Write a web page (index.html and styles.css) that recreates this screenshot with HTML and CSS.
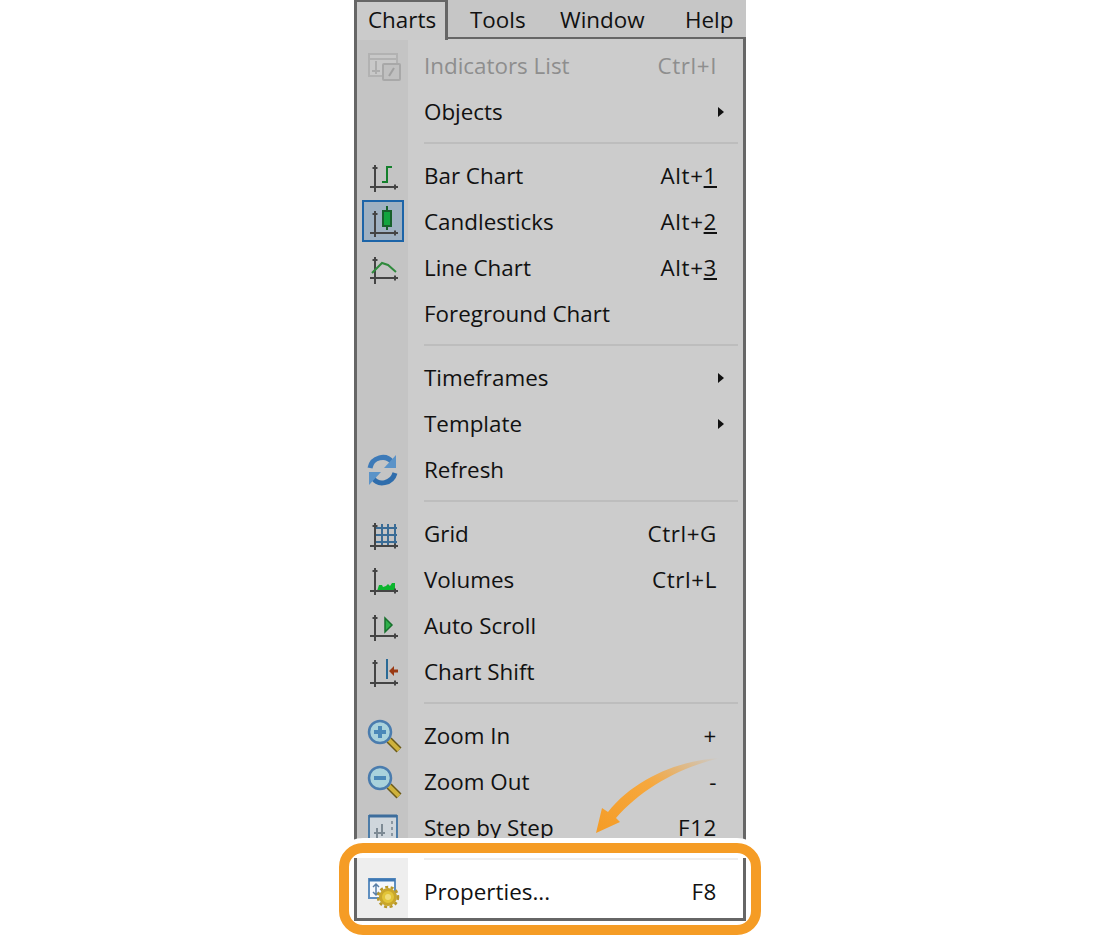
FILE: index.html
```html
<!DOCTYPE html>
<html lang="en">
<head>
  <meta charset="UTF-8" />
  <title>Charts menu</title>
  <link rel="stylesheet" href="styles.css">
</head>
<body>
  <div class="menu">
    <div class="menubar">
      <span class="tab tab-open">Charts</span>
      <span class="tab tab-tools">Tools</span>
      <span class="tab tab-window">Window</span>
      <span class="tab">Help</span>
    </div>

    <div class="dropdown">
      <div class="row disabled">
        <div class="gutter">
          <svg class="icon" viewBox="0 0 36 36">
            <rect x="3" y="6" width="28" height="22" fill="#c8c8c8" stroke="#b2b2b2" stroke-width="2"/>
            <path d="M3 11H31" stroke="#b2b2b2" stroke-width="2"/>
            <path d="M10 13V26M6 23H14" stroke="#adadad" stroke-width="2"/>
            <rect x="17" y="16" width="17" height="16" rx="1" fill="#c0c0c0" stroke="#a8a8a8" stroke-width="2"/>
            <path d="M23 28 28 20" stroke="#a0a0a0" stroke-width="2"/>
          </svg>
        </div>
        <span class="label">Indicators List</span>
        <span class="keys">Ctrl+I</span>
      </div>
      <div class="row">
        <div class="gutter"></div>
        <span class="label">Objects</span>
        <span class="more"></span>
      </div>

      <div class="sep"></div>

      <div class="row">
        <div class="gutter">
          <svg class="icon" viewBox="0 0 36 36">
            <path class="axis" d="M9 7V34M4 29H32M6.5 10H11.5M29 26.5V31.5"/>
            <path class="bar" d="M21 25V9H26M21 24H16"/>
          </svg>
        </div>
        <span class="label">Bar Chart</span>
        <span class="keys">Alt+<u>1</u></span>
      </div>
      <div class="row">
        <div class="gutter">
          <svg class="icon" viewBox="0 0 36 36">
            <rect x="-3" y="-3" width="40" height="40" fill="#9fb1c2" stroke="#1c64a8" stroke-width="2"/>
            <path class="axis" d="M9 7V33M4 29H32M6.5 10H11.5M29 26.5V31.5"/>
            <path d="M21 2V26" stroke="#17602c" stroke-width="2"/>
            <rect x="17" y="7" width="8" height="15" fill="#12a53f" stroke="#17602c" stroke-width="2"/>
          </svg>
        </div>
        <span class="label">Candlesticks</span>
        <span class="keys">Alt+<u>2</u></span>
      </div>
      <div class="row">
        <div class="gutter">
          <svg class="icon" viewBox="0 0 36 36">
            <path class="axis" d="M9 7V34M4 28H32M6.5 10H11.5M29 25.5V30.5"/>
            <path class="line" d="M6 23 16 13 22 15 30 22"/>
          </svg>
        </div>
        <span class="label">Line Chart</span>
        <span class="keys">Alt+<u>3</u></span>
      </div>
      <div class="row">
        <div class="gutter"></div>
        <span class="label">Foreground Chart</span>
      </div>

      <div class="sep"></div>

      <div class="row">
        <div class="gutter"></div>
        <span class="label">Timeframes</span>
        <span class="more"></span>
      </div>
      <div class="row">
        <div class="gutter"></div>
        <span class="label">Template</span>
        <span class="more"></span>
      </div>
      <div class="row">
        <div class="gutter">
          <svg class="icon" viewBox="0 0 36 36">
            <path d="M4 16C6 5 20 2 26 10" fill="none" stroke="#3d7ab8" stroke-width="5"/>
            <path d="M30 3V16H18Z" fill="#5b93c8"/>
            <path d="M29 21C26 32 12 34 7 26" fill="none" stroke="#2f6dac" stroke-width="5"/>
            <path d="M3 33V20H15Z" fill="#5b93c8"/>
          </svg>
        </div>
        <span class="label">Refresh</span>
      </div>

      <div class="sep"></div>

      <div class="row">
        <div class="gutter">
          <svg class="icon" viewBox="0 0 36 36">
            <path d="M16 8V30M22 8V30M29 8V30M9 12H31M9 19H31M9 26H31" fill="none" stroke="#3a6c96" stroke-width="2"/>
            <path class="axis" d="M9 7V34M4 30H32M6.5 10H11.5M29 27.5V32.5"/>
          </svg>
        </div>
        <span class="label">Grid</span>
        <span class="keys">Ctrl+G</span>
      </div>
      <div class="row">
        <div class="gutter">
          <svg class="icon" viewBox="0 0 36 36">
            <path d="M11 29 13 23H16L17 25 20 24 22 22 24 24 26 21H29V29Z" fill="#0cb52e"/>
            <path class="axis" d="M9 6V33M4 29H32M6.5 9H11.5M29 26.5V31.5"/>
          </svg>
        </div>
        <span class="label">Volumes</span>
        <span class="keys">Ctrl+L</span>
      </div>
      <div class="row">
        <div class="gutter">
          <svg class="icon" viewBox="0 0 36 36">
            <path class="axis" d="M9 7V33M4 28H32M6.5 10H11.5M29 25.5V30.5"/>
            <path d="M19 10V24L26 17Z" fill="#2fb04a" stroke="#17702c" stroke-width="1.5"/>
          </svg>
        </div>
        <span class="label">Auto Scroll</span>
      </div>
      <div class="row">
        <div class="gutter">
          <svg class="icon" viewBox="0 0 36 36">
            <path class="axis" d="M9 6V33M4 29H32M6.5 9H11.5M29 26.5V31.5"/>
            <path d="M21 5V25" stroke="#2a6a96" stroke-width="2"/>
            <path d="M23 17 28 12V15.5H32V18.5H28V22Z" fill="#9a3a14"/>
          </svg>
        </div>
        <span class="label">Chart Shift</span>
      </div>

      <div class="sep"></div>

      <div class="row">
        <div class="gutter">
          <svg class="icon" viewBox="0 0 36 36">
            <path d="M23 22 33 32" stroke="#6b5a18" stroke-width="7"/>
            <path d="M23 22 33 32" stroke="#cfb23c" stroke-width="4"/>
            <circle class="lens" cx="14" cy="14" r="11"/>
            <path d="M14 8V20M8 14H20" stroke="#4a88b8" stroke-width="4"/>
          </svg>
        </div>
        <span class="label">Zoom In</span>
        <span class="keys">+</span>
      </div>
      <div class="row">
        <div class="gutter">
          <svg class="icon" viewBox="0 0 36 36">
            <path d="M23 22 33 32" stroke="#6b5a18" stroke-width="7"/>
            <path d="M23 22 33 32" stroke="#cfb23c" stroke-width="4"/>
            <circle class="lens" cx="14" cy="14" r="11"/>
            <path d="M8 14H20" stroke="#4a88b8" stroke-width="4"/>
          </svg>
        </div>
        <span class="label">Zoom Out</span>
        <span class="keys">-</span>
      </div>
      <div class="row">
        <div class="gutter">
          <svg class="icon" viewBox="0 0 36 36">
            <rect x="3" y="6" width="28" height="28" fill="#cfd6dc" stroke="#4c7ca8" stroke-width="2"/>
            <path d="M3 6H31" stroke="#3d6d9c" stroke-width="3"/>
            <path d="M11 18V28M16 14V26M8 23H19" stroke="#7d8a94" stroke-width="2"/>
            <path d="M26 11V30" stroke="#8a97a2" stroke-width="2" stroke-dasharray="3 3"/>
          </svg>
        </div>
        <span class="label">Step by Step</span>
        <span class="keys">F12</span>
      </div>

      <div class="lit">
        <div class="sep sep-lit"></div>
        <div class="row">
          <div class="gutter">
            <svg class="icon" viewBox="0 0 36 36">
              <rect x="3" y="5" width="26" height="19" fill="#f6f9fc" stroke="#5f8fc0" stroke-width="2"/>
              <path d="M3 6H29" stroke="#3f78b4" stroke-width="3"/>
              <path d="M10 10V21M7 13 10 10 13 13M7 18 10 21 13 18" fill="none" stroke="#5a7fa6" stroke-width="1.5"/>
              <circle cx="22" cy="23" r="7.5" fill="#e2c437" stroke="#c9a62a" stroke-width="3"/>
              <circle cx="22" cy="23" r="10" fill="none" stroke="#b8982a" stroke-width="2.5" stroke-dasharray="3 2.5"/>
              <circle cx="22" cy="23" r="3" fill="#f0dc78"/>
            </svg>
          </div>
          <span class="label">Properties...</span>
          <span class="keys">F8</span>
        </div>
      </div>
    </div>

    <div class="callout"></div>

    <svg class="arrow" viewBox="0 0 140 90" width="140" height="90">
      <defs>
        <linearGradient id="arrowFade" x1="1" y1="0" x2="0" y2="1">
          <stop offset="0" stop-color="#f59c25" stop-opacity="0"/>
          <stop offset="0.45" stop-color="#f6a83e"/>
          <stop offset="1" stop-color="#f59c25"/>
        </linearGradient>
      </defs>
      <path fill="url(#arrowFade)" d="M130 8C90 10 45 28 18 62L12 58 6 83 30 72 26 68C50 40 90 17 130 8Z"/>
    </svg>
  </div>
</body>
</html>
```

FILE: styles.css
```css
* {
  box-sizing: border-box;
}
html, body {
  height: 940px;
}
body {
  margin: 0;
  background: #fff;
  color: #111;
  font-family: 'Open Sans', sans-serif;
  font-size: 22.4px;
  display: flex;
  justify-content: center;
}
.menu {
  position: relative;
  width: 392px;
  height: 940px;
}
.menubar {
  display: flex;
  height: 37px;
  background: #c6c6c6;
  line-height: 39px;
}
.tab {
  white-space: nowrap;
}
.tab-open {
  width: 94px;
  height: 40px;
  padding-left: 11px;
  background: #cbcbcb;
  border: 3px solid #666;
  border-width: 2px 3px 0;
  line-height: 35px;
  position: relative;
  z-index: 1;
}
.tab-tools {
  margin-left: 22px;
  width: 90px;
}
.tab-window {
  width: 125px;
}
.dropdown {
  border: 3px solid #666;
  border-top-width: 2px;
  border-bottom: none;
  padding-top: 4px;
  height: 884px;
  background: linear-gradient(90deg, #c4c4c4 51px, #cccccc 51px);
}
.row {
  display: flex;
  align-items: center;
  height: 46px;
  padding-right: 26px;
}
.gutter {
  width: 67px;
  padding-left: 9px;
  flex-shrink: 0;
  display: flex;
  align-items: center;
}
.icon {
  width: 36px;
  height: 36px;
  overflow: visible;
  display: block;
}
.axis {
  fill: none;
  stroke: #444;
  stroke-width: 2;
}
.bar {
  fill: none;
  stroke: #14802c;
  stroke-width: 2;
}
.line {
  fill: none;
  stroke: #2f8a3c;
  stroke-width: 2;
}
.lens {
  fill: #a9d2dc;
  stroke: #4a7cae;
  stroke-width: 2.5;
}
.label {
  flex: 1;
  padding-bottom: 2px;
}
.keys {
  white-space: nowrap;
  padding-bottom: 2px;
  letter-spacing: 0.6px;
}
.disabled {
  color: #8e8e8e;
}
.more {
  width: 0;
  height: 0;
  margin-right: -7px;
  border-left: 6px solid #111;
  border-top: 5px solid transparent;
  border-bottom: 5px solid transparent;
}
.sep {
  height: 18px;
  margin-left: 67px;
  margin-right: 5px;
  padding-top: 7px;
}
.sep::before {
  content: "";
  display: block;
  height: 2px;
  background: #bdbdbd;
}
.lit {
  position: relative;
  z-index: 2;
  margin: 7px -3px 0;
  height: 63px;
  background: linear-gradient(90deg, #eeeeee 51px, #fff 51px);
  border: 3px solid #666;
  border-top: none;
}
.sep-lit {
  height: 11px;
  padding-top: 0;
}
.sep-lit::before {
  background: #eeeeee;
}
.callout {
  position: absolute;
  left: -15px;
  top: 843px;
  width: 422px;
  height: 92px;
  border: 10px solid #f59c25;
  border-radius: 24px;
  background: #fff;
  box-shadow: 0 0 0 5px #fff;
  z-index: 1;
}
.arrow {
  position: absolute;
  left: 236px;
  top: 750px;
  z-index: 3;
}
```
